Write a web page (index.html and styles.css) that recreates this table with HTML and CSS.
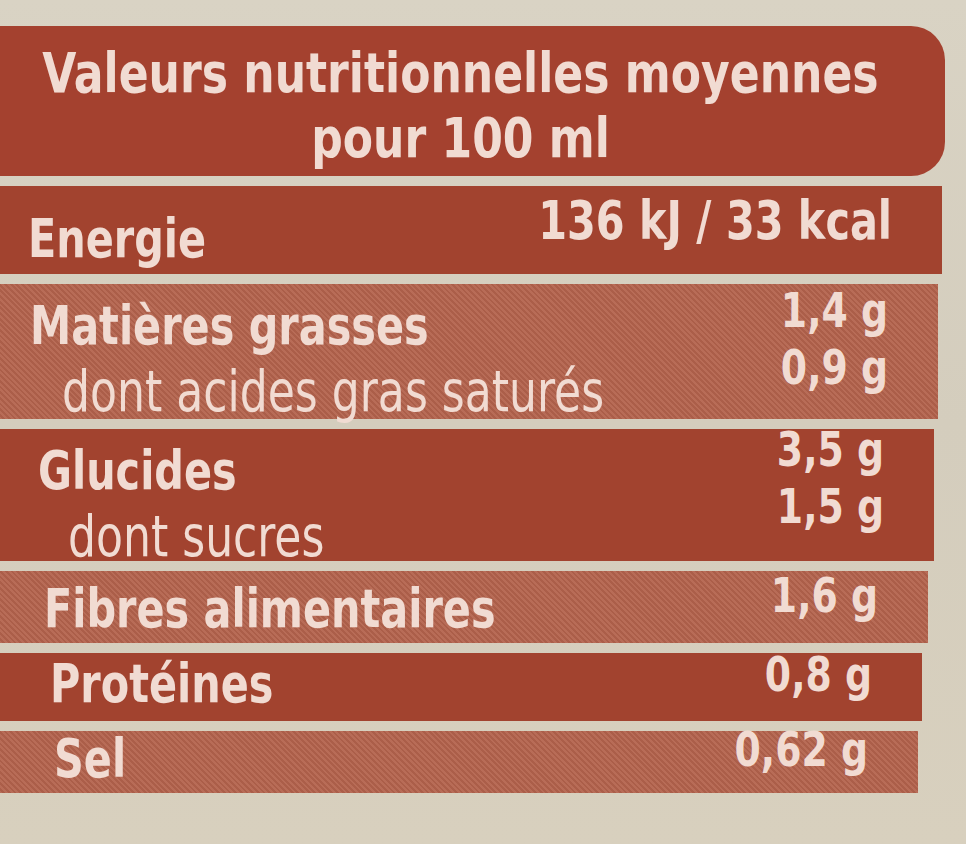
FILE: index.html
```html
<!DOCTYPE html>
<html lang="fr">
<head>
<meta charset="utf-8">
<title>Valeurs nutritionnelles</title>
<link rel="stylesheet" href="styles.css">
</head>
<body>
<div class="label">
  <div class="head">
    <div class="head-line"><span class="t">Valeurs nutritionnelles moyennes</span></div>
    <div class="head-line"><span class="t">pour 100 ml</span></div>
  </div>
  <div class="row solid r-energie">
    <div class="names"><span class="t main">Energie</span></div>
    <div class="vals"><span class="t">136 kJ / 33 kcal</span></div>
  </div>
  <div class="row hatch r-mg">
    <div class="names"><span class="t main">Matières grasses</span><span class="t sub">dont acides gras saturés</span></div>
    <div class="vals"><span class="t">1,4 g</span><span class="t">0,9 g</span></div>
  </div>
  <div class="row solid r-glu">
    <div class="names"><span class="t main">Glucides</span><span class="t sub">dont sucres</span></div>
    <div class="vals"><span class="t">3,5 g</span><span class="t">1,5 g</span></div>
  </div>
  <div class="row hatch r-fib">
    <div class="names"><span class="t main">Fibres alimentaires</span></div>
    <div class="vals"><span class="t">1,6 g</span></div>
  </div>
  <div class="row solid r-pro">
    <div class="names"><span class="t main">Protéines</span></div>
    <div class="vals"><span class="t">0,8 g</span></div>
  </div>
  <div class="row hatch r-sel">
    <div class="names"><span class="t main">Sel</span></div>
    <div class="vals"><span class="t">0,62 g</span></div>
  </div>
</div>
</body>
</html>
```
FILE: styles.css
```css
html, body {
  margin: 0;
  padding: 0;
}
body {
  width: 966px;
  height: 844px;
  overflow: hidden;
  background: linear-gradient(180deg, #d9d3c4 0%, #d4cdbd 50%, #d8d0be 100%);
  font-family: "DejaVu Sans", sans-serif;
  font-stretch: condensed;
  color: #f1dbd2;
}
.t {
  display: inline-block;
  line-height: 1.17;
  transform: scaleY(1.15);
  white-space: nowrap;
}
.names .t {
  align-self: flex-start;
}
.vals .t {
  align-self: flex-end;
}
.label {
  padding-top: 26px;
  display: flex;
  flex-direction: column;
  gap: 10px;
}
.head {
  width: 945px;
  height: 150px;
  box-sizing: border-box;
  background: #a4412f;
  border-radius: 0 34px 34px 0;
  display: flex;
  flex-direction: column;
  align-items: center;
  justify-content: center;
  gap: 8px;
  font-weight: bold;
  font-size: 49px;
  padding: 10px 24px 0 0;
}
.head .t {
  transform: scaleY(1.12);
}
.row {
  box-sizing: border-box;
  display: flex;
  justify-content: space-between;
  align-items: flex-start;
  padding: 0 50px 0 28px;
  font-size: 46px;
}
.solid {
  background: #a2432f;
}
.hatch {
  background-color: #b4634d;
  background-image: repeating-linear-gradient(45deg, rgba(255,255,255,0.06) 0 2px, rgba(0,0,0,0.05) 2px 4px);
}
.names, .vals {
  display: flex;
  flex-direction: column;
}
.names {
  gap: 10px;
}
.vals {
  align-items: flex-end;
  font-weight: bold;
  font-size: 42px;
  gap: 8px;
}
.main {
  font-weight: bold;
}
.sub {
  font-weight: normal;
  font-size: 49px;
  margin-left: 32px;
}
.r-energie {
  width: 942px;
  height: 88px;
}
.r-energie .names { margin-top: 27px; }
.r-energie .vals { margin-top: 9px; font-size: 46px; }

.r-mg {
  width: 938px;
  height: 135px;
}
.r-mg .names { margin-top: 16px; padding-left: 2px; }
.r-mg .vals { margin-top: 2px; }

.r-glu {
  width: 934px;
  height: 132px;
}
.r-glu .names { margin-top: 16px; padding-left: 10px; }
.r-glu .names .sub { margin-left: 30px; }
.r-glu .vals { margin-top: -4px; }

.r-fib {
  width: 928px;
  height: 72px;
}
.r-fib .names { margin-top: 12px; padding-left: 16px; }
.r-fib .vals { margin-top: 0; }

.r-pro {
  width: 922px;
  height: 68px;
}
.r-pro .names { margin-top: 5px; padding-left: 22px; }
.r-pro .vals { margin-top: -3px; }

.r-sel {
  width: 918px;
  height: 62px;
}
.r-sel .names { margin-top: 2px; padding-left: 26px; }
.r-sel .vals { margin-top: -6px; }
```
